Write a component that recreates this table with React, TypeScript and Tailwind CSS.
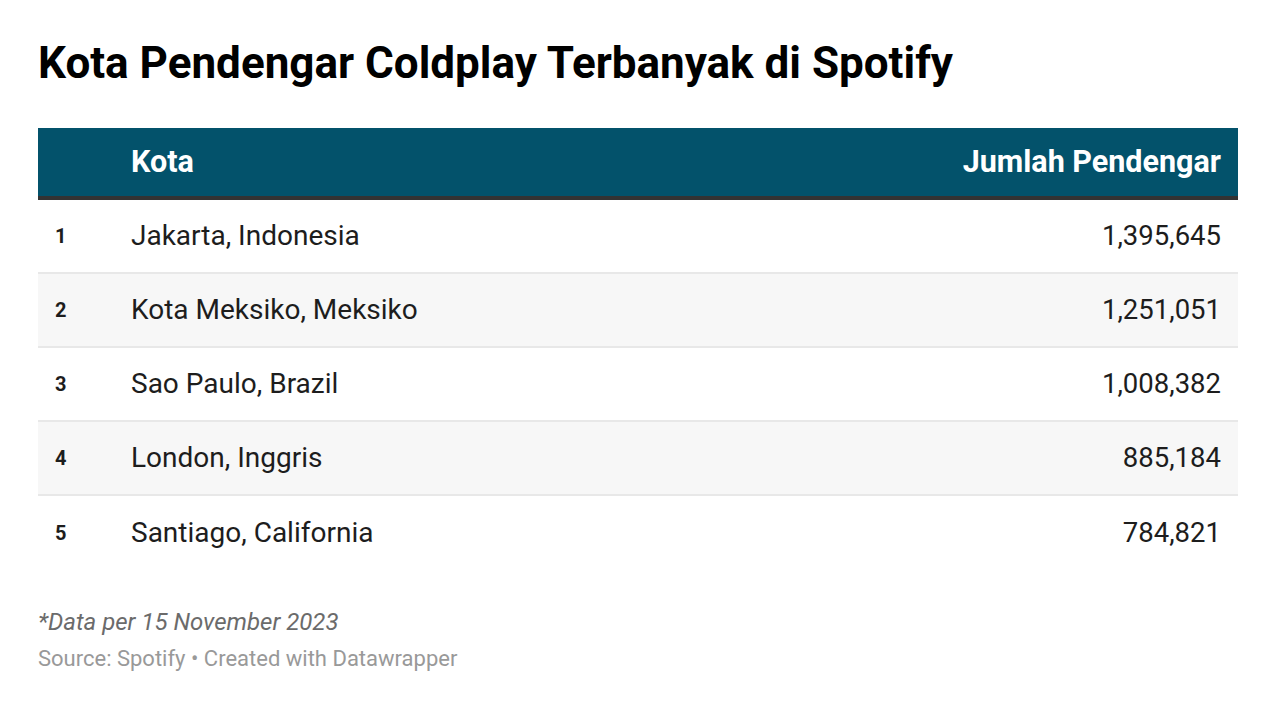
import React from 'react';

const rows = [
  { rank: 1, city: 'Jakarta, Indonesia', listeners: '1,395,645' },
  { rank: 2, city: 'Kota Meksiko, Meksiko', listeners: '1,251,051' },
  { rank: 3, city: 'Sao Paulo, Brazil', listeners: '1,008,382' },
  { rank: 4, city: 'London, Inggris', listeners: '885,184' },
  { rank: 5, city: 'Santiago, California', listeners: '784,821' },
];

const App = () => {
  return (
    <div className="min-h-[710px] w-[1276px] bg-white px-[38px] pt-[38px] font-['Roboto',sans-serif] text-[#1d1d1d]">
      <h1 className="text-[44px] font-bold leading-[50px] text-black">
        Kota Pendengar Coldplay Terbanyak di Spotify
      </h1>

      <div className="mt-[40px] w-[1200px]">
        <div className="flex h-[72px] items-center border-b-4 border-[#333333] bg-[#03526b] text-[30.5px] font-bold text-white">
          <div className="w-[93px]" />
          <div className="flex-1">Kota</div>
          <div className="pr-[17px]">Jumlah Pendengar</div>
        </div>

        {rows.map((r, i) => (
          <div
            key={r.rank}
            className={`flex h-[74px] items-center ${i % 2 === 1 ? 'bg-[#f7f7f7]' : 'bg-white'} ${i < rows.length - 1 ? 'border-b-2 border-[#e8e8e8]' : ''}`}
          >
            <div className="w-[93px] pl-[17px] text-[20px] font-bold">{r.rank}</div>
            <div className="flex-1 text-[28px]">{r.city}</div>
            <div className="pr-[17px] text-[27.5px]">{r.listeners}</div>
          </div>
        ))}
      </div>

      <div className="mt-[36px] text-[24px] italic leading-[32px] text-[#6b6b6b]">*Data per 15 November 2023</div>
      <div className="mt-[6px] text-[22px] leading-[30px] text-[#999999]">
        Source: Spotify • Created with Datawrapper
      </div>
    </div>
  );
};

export default App;
